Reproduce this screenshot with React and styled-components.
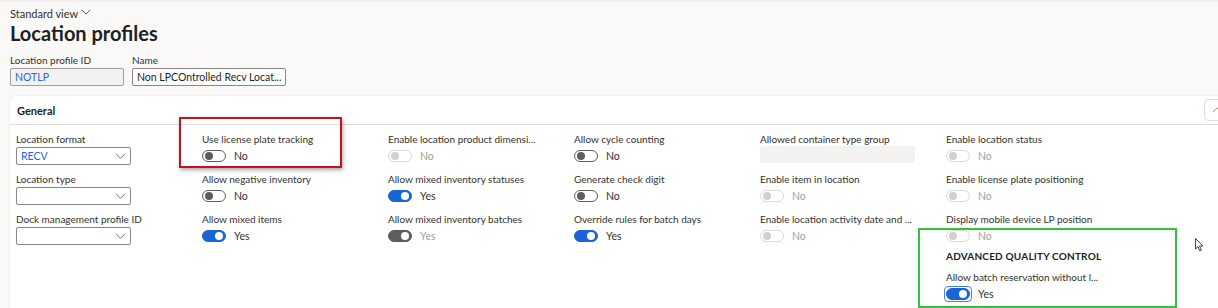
import styled, { createGlobalStyle } from "styled-components";

const GlobalStyle = createGlobalStyle`
  html, body {
    margin: 0;
    padding: 0;
    background: #faf9f8;
    overflow: hidden;
  }
  body {
    font-family: Lato, "Noto Sans", sans-serif;
    color: #323130;
  }
`;

const columns = [
  [
    { label: "Location format", kind: "select", value: "RECV" },
    { label: "Location type", kind: "select", value: "" },
    { label: "Dock management profile ID", kind: "select", value: "" },
  ],
  [
    { label: "Use license plate tracking", kind: "toggle", state: "off" },
    { label: "Allow negative inventory", kind: "toggle", state: "off" },
    { label: "Allow mixed items", kind: "toggle", state: "on" },
  ],
  [
    { label: "Enable location product dimensi...", kind: "toggle", state: "disabled" },
    { label: "Allow mixed inventory statuses", kind: "toggle", state: "on" },
    { label: "Allow mixed inventory batches", kind: "toggle", state: "locked" },
  ],
  [
    { label: "Allow cycle counting", kind: "toggle", state: "off" },
    { label: "Generate check digit", kind: "toggle", state: "off" },
    { label: "Override rules for batch days", kind: "toggle", state: "on" },
  ],
  [
    { label: "Allowed container type group", kind: "text" },
    { label: "Enable item in location", kind: "toggle", state: "disabled" },
    { label: "Enable location activity date and ...", kind: "toggle", state: "disabled" },
  ],
  [
    { label: "Enable location status", kind: "toggle", state: "disabled" },
    { label: "Enable license plate positioning", kind: "toggle", state: "disabled" },
    { label: "Display mobile device LP position", kind: "toggle", state: "disabled" },
    { heading: "ADVANCED QUALITY CONTROL" },
    { label: "Allow batch reservation without l...", kind: "toggle", state: "on", focused: true },
  ],
];

function Toggle({ state, focused }) {
  const on = state === "on" || state === "locked";
  return (
    <ToggleRow>
      <ToggleFocus $focused={focused}>
        <Track $state={state}>
          <Knob $state={state} $on={on} />
        </Track>
      </ToggleFocus>
      <ToggleText $muted={state === "disabled" || state === "locked"}>
        {on ? "Yes" : "No"}
      </ToggleText>
    </ToggleRow>
  );
}

function Chevron({ up }) {
  return (
    <svg width="12" height="8" viewBox="0 0 12 8" fill="none">
      <path
        d={up ? "M1 6.5 L6 1.5 L11 6.5" : "M1 1.5 L6 6.5 L11 1.5"}
        stroke="currentColor"
        strokeWidth="1"
      />
    </svg>
  );
}

function Field({ item }) {
  if (item.heading) return <SectionHeading>{item.heading}</SectionHeading>;
  return (
    <FieldBox>
      <Label>{item.label}</Label>
      {item.kind === "toggle" && <Toggle state={item.state} focused={item.focused} />}
      {item.kind === "select" && (
        <Select>
          <SelectValue>{item.value}</SelectValue>
          <Chevron />
        </Select>
      )}
      {item.kind === "text" && <ReadOnlyBox />}
    </FieldBox>
  );
}

export default function App() {
  return (
    <Page>
      <GlobalStyle />
      <TopShade />
      <ViewPicker>
        Standard view <Chevron />
      </ViewPicker>
      <Title>Location profiles</Title>
      <HeaderFields>
        <HeaderField>
          <Label>Location profile ID</Label>
          <HeaderInput $width={114} $readOnly>NOTLP</HeaderInput>
        </HeaderField>
        <HeaderField>
          <Label>Name</Label>
          <HeaderInput $width={154}>Non LPCOntrolled Recv Locat...</HeaderInput>
        </HeaderField>
      </HeaderFields>
      <Card>
        <CardHeader>
          <CardTitle>General</CardTitle>
          <CollapseButton>
            <Chevron up />
          </CollapseButton>
        </CardHeader>
        <Grid>
          {columns.map((col, i) => (
            <Column key={i}>
              {col.map((item, j) => (
                <Field key={j} item={item} />
              ))}
            </Column>
          ))}
        </Grid>
      </Card>
      <RedMark />
      <GreenMark />
      <Cursor width="9" height="14" viewBox="0 0 9 14">
        <path d="M0.5 0.5 L0.5 11 L3 8.6 L4.8 12.8 L6.4 12.1 L4.6 8 L8 8 Z" fill="#fff" stroke="#333" strokeWidth="0.9" />
      </Cursor>
    </Page>
  );
}

const Page = styled.div`
  position: relative;
  height: 308px;
  padding: 0 0 0 10px;
  box-sizing: border-box;
  overflow: hidden;
`;

const TopShade = styled.div`
  height: 3px;
  margin-left: -10px;
  background: linear-gradient(#ecebea, #faf9f8);
`;

const ViewPicker = styled.div`
  display: flex;
  align-items: center;
  gap: 3px;
  height: 16px;
  margin-top: 2px;
  font-size: 11px;
  color: #323130;
  svg {
    width: 10px;
    margin-top: -2px;
  }
`;

const Title = styled.h1`
  margin: 0;
  font-size: 20px;
  line-height: 24px;
  font-weight: 700;
  color: #201f1e;
`;

const HeaderFields = styled.div`
  display: flex;
  gap: 8px;
  margin-top: 8px;
`;

const HeaderField = styled.div`
  display: flex;
  flex-direction: column;
  gap: 1px;
`;

const HeaderInput = styled.div`
  width: ${(p) => p.$width}px;
  height: 18px;
  box-sizing: border-box;
  border: 1px solid ${(p) => (p.$readOnly ? "#a19f9d" : "#8a8886")};
  border-radius: 2px;
  background: ${(p) => (p.$readOnly ? "#f3f2f1" : "#fff")};
  color: ${(p) => (p.$readOnly ? "#2266e3" : "#201f1e")};
  font-size: 10.5px;
  line-height: 16px;
  padding: 0 4px;
  white-space: nowrap;
  overflow: hidden;
`;

const Card = styled.section`
  margin-top: 10px;
  margin-right: -20px;
  background: #fff;
  border-radius: 6px;
  box-shadow: 0 0 2px rgba(0, 0, 0, 0.12);
  height: 240px;
`;

const CardHeader = styled.div`
  display: flex;
  align-items: center;
  justify-content: space-between;
  height: 28px;
  border-bottom: 1px solid #e1dfdd;
  padding: 0 0 0 7px;
`;

const CardTitle = styled.div`
  font-size: 11px;
  font-weight: 700;
  color: #201f1e;
`;

const CollapseButton = styled.div`
  display: flex;
  align-items: center;
  justify-content: center;
  width: 24px;
  height: 20px;
  margin-right: 8px;
  border: 1px solid #e1dfdd;
  border-radius: 4px;
  color: #c07040;
  svg {
    width: 10px;
  }
`;

const Grid = styled.div`
  display: grid;
  grid-template-columns: repeat(6, 186px);
  padding: 7px 0 0 6px;
`;

const Column = styled.div`
  display: flex;
  flex-direction: column;
`;

const FieldBox = styled.div`
  display: flex;
  flex-direction: column;
  height: 40px;
`;

const Label = styled.div`
  font-size: 10px;
  line-height: 14px;
  color: #323130;
  white-space: nowrap;
`;

const SectionHeading = styled.div`
  font-size: 10px;
  font-weight: 700;
  letter-spacing: 0.2px;
  color: #201f1e;
  height: 22px;
  line-height: 16px;
  margin-top: -4px;
`;

const Select = styled.div`
  display: flex;
  align-items: center;
  justify-content: space-between;
  width: 115px;
  height: 18px;
  box-sizing: border-box;
  margin-top: 1px;
  padding: 0 4px;
  border: 1px solid #8a8886;
  border-radius: 2px;
  color: #605e5c;
  svg {
    width: 11px;
  }
`;

const SelectValue = styled.span`
  font-size: 10.5px;
  color: #2266e3;
`;

const ReadOnlyBox = styled.div`
  width: 155px;
  height: 17px;
  margin-top: 0;
  border-radius: 2px;
  background: #f3f2f1;
`;

const ToggleRow = styled.div`
  display: flex;
  align-items: center;
  gap: 6px;
  margin-top: 2px;
  height: 16px;
`;

const ToggleFocus = styled.div`
  display: flex;
  padding: 1px;
  border-radius: 4px;
  border: 1px solid ${(p) => (p.$focused ? "#4a7de0" : "transparent")};
  margin-left: -2px;
`;

const trackColors = {
  off: { bg: "#fff", border: "#605e5c" },
  on: { bg: "#1a64d8", border: "#1a64d8" },
  locked: { bg: "#605e5c", border: "#605e5c" },
  disabled: { bg: "#fff", border: "#dcdad8" },
};

const Track = styled.div`
  display: flex;
  align-items: center;
  justify-content: ${(p) => (p.$state === "on" || p.$state === "locked" ? "flex-end" : "flex-start")};
  width: 24px;
  height: 12px;
  box-sizing: border-box;
  padding: 0 2px;
  border-radius: 6px;
  border: 1px solid ${(p) => trackColors[p.$state].border};
  background: ${(p) => trackColors[p.$state].bg};
`;

const Knob = styled.div`
  width: 8px;
  height: 8px;
  border-radius: 50%;
  background: ${(p) => (p.$on ? "#fff" : p.$state === "disabled" ? "#d2d0ce" : "#605e5c")};
`;

const ToggleText = styled.span`
  font-size: 10.5px;
  color: ${(p) => (p.$muted ? "#a19f9d" : "#323130")};
`;

const RedMark = styled.div`
  position: absolute;
  left: 179px;
  top: 117px;
  width: 163px;
  height: 51px;
  box-sizing: border-box;
  border: 2px solid #c8101e;
  box-shadow: 1px 2px 4px rgba(0, 0, 0, 0.35);
  pointer-events: none;
`;

const GreenMark = styled.div`
  position: absolute;
  left: 918px;
  top: 228px;
  width: 259px;
  height: 80px;
  box-sizing: border-box;
  border: 2px solid #2fc43a;
  pointer-events: none;
`;

const Cursor = styled.svg`
  position: absolute;
  left: 1195px;
  top: 238px;
`;
